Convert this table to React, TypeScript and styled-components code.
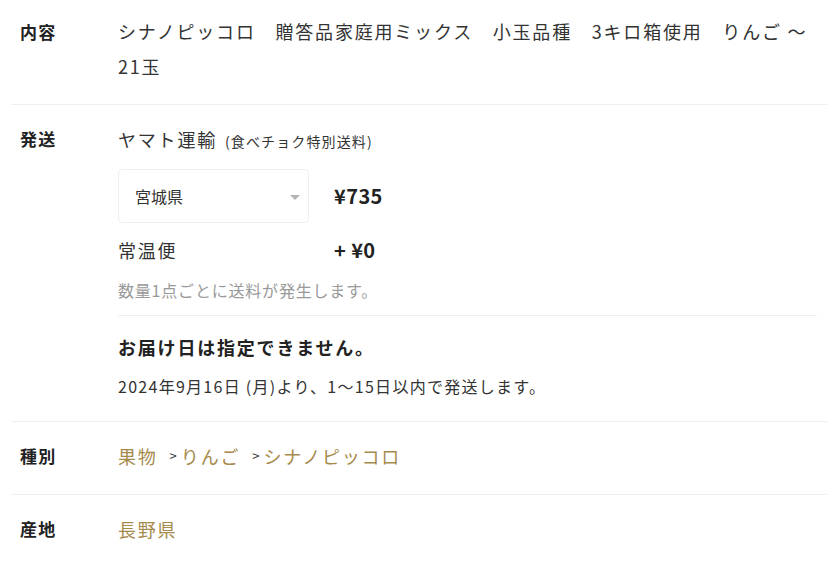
import React from 'react'
import styled, { createGlobalStyle } from 'styled-components'

const GlobalStyle = createGlobalStyle`
    html, body {
        margin: 0;
        padding: 0;
        background: #fff;
    }
    body {
        font-family: "Noto Sans CJK JP", "Noto Sans", sans-serif;
        color: #333;
    }
`

const Table = styled.div`
    margin: 0 7px 0 11px;
`

const Row = styled.div<{ first?: boolean; last?: boolean }>`
    display: grid;
    grid-template-columns: 107px 1fr;
    padding: ${({ first }) => (first ? 14 : 16)}px 10px 20px 0;
    border-bottom: ${({ last }) => (last ? 'none' : '1px solid #efefef')};
`

const Label = styled.div`
    padding-left: 9px;
    font-size: 17px;
    font-weight: bold;
    letter-spacing: 0.07em;
    line-height: 36px;
    color: #222;
`

const Body = styled.div`
    font-size: 18px;
    letter-spacing: 0.1em;
    line-height: 35px;
    color: #333;
`

const Carrier = styled.div`
    line-height: 36px;
    height: 36px;
`

const Note = styled.span`
    font-size: 14px;
    letter-spacing: 0.08em;
    line-height: 1;
    margin-left: 8px;
`

const PriceGrid = styled.div<{ gap: number }>`
    display: grid;
    grid-template-columns: 191px auto;
    column-gap: 25px;
    align-items: center;
    justify-content: start;
    margin-top: ${({ gap }) => gap}px;
`

const Select = styled.div`
    box-sizing: border-box;
    height: 54px;
    border: 1px solid #efefef;
    border-radius: 4px;
    display: flex;
    align-items: center;
    justify-content: space-between;
    padding: 0 8px 0 16px;
    font-size: 16px;
    letter-spacing: 0;
    color: #333;
`

const Arrow = styled.span`
    width: 0;
    height: 0;
    border-left: 5px solid transparent;
    border-right: 5px solid transparent;
    border-top: 5px solid #b3b3b3;
    margin-top: 2px;
`

const Price = styled.div`
    font-size: 20px;
    font-weight: bold;
    letter-spacing: 0.02em;
    line-height: 36px;
    color: #222;
`

const Plain = styled.div`
    line-height: 36px;
`

const Hint = styled.div`
    font-size: 16px;
    letter-spacing: 0.05em;
    line-height: 30px;
    color: #999;
    margin-top: 7px;
    padding-bottom: 10px;
    border-bottom: 1px solid #efefef;
`

const Strong = styled.div`
    font-size: 18px;
    font-weight: bold;
    letter-spacing: 0.1em;
    line-height: 36px;
    color: #222;
    margin-top: 13px;
`

const Small = styled.div`
    font-size: 16px;
    letter-spacing: 0.08em;
    line-height: 30px;
    color: #333;
    margin-top: 6px;
`

const Crumbs = styled.div`
    display: flex;
    align-items: center;
    font-size: 18px;
    letter-spacing: 0.1em;
    line-height: 36px;
`

const Crumb = styled.a`
    color: #a68a4c;
    text-decoration: none;
`

const Sep = styled.span`
    font-size: 13px;
    color: #333;
    margin: 0 4px 0 12px;
    letter-spacing: 0;
`

const App: React.FunctionComponent = () => {
    return (
        <>
            <GlobalStyle />
            <Table>
                <Row first>
                    <Label>内容</Label>
                    <Body>シナノピッコロ　贈答品家庭用ミックス　小玉品種　3キロ箱使用　りんご ～21玉</Body>
                </Row>

                <Row>
                    <Label>発送</Label>
                    <Body>
                        <Carrier>
                            ヤマト運輸<Note>(食べチョク特別送料)</Note>
                        </Carrier>
                        <PriceGrid gap={12}>
                            <Select>
                                <span>宮城県</span>
                                <Arrow />
                            </Select>
                            <Price>¥735</Price>
                        </PriceGrid>
                        <PriceGrid gap={9}>
                            <Plain>常温便</Plain>
                            <Price>+ ¥0</Price>
                        </PriceGrid>
                        <Hint>数量1点ごとに送料が発生します。</Hint>
                        <Strong>お届け日は指定できません。</Strong>
                        <Small>2024年9月16日 (月)より、1～15日以内で発送します。</Small>
                    </Body>
                </Row>

                <Row>
                    <Label>種別</Label>
                    <Crumbs>
                        <Crumb href="#">果物</Crumb>
                        <Sep>&gt;</Sep>
                        <Crumb href="#">りんご</Crumb>
                        <Sep>&gt;</Sep>
                        <Crumb href="#">シナノピッコロ</Crumb>
                    </Crumbs>
                </Row>

                <Row last>
                    <Label>産地</Label>
                    <Crumbs>
                        <Crumb href="#">長野県</Crumb>
                    </Crumbs>
                </Row>
            </Table>
        </>
    )
}

export default App
